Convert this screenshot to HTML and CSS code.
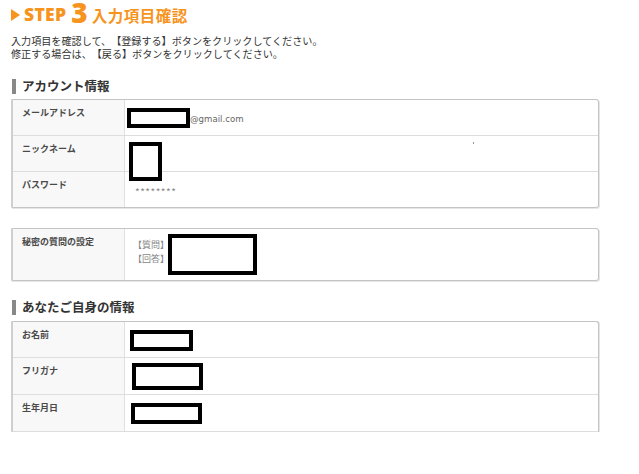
FILE: index.html
```html
<!DOCTYPE html>
<html lang="ja">
<head>
  <meta charset="UTF-8" />
  <meta name="viewport" content="width=device-width, initial-scale=1.0"/>
  <title>入力項目確認</title>
  <link rel="stylesheet" href="styles.css">
</head>
<body>

  <div class="page">
    <h1 class="step-title">
      <span class="step-arrow"></span><span class="step-word">STEP</span><span class="step-num">3</span><span class="step-name">入力項目確認</span>
    </h1>

    <p class="lead">
      <span class="lead-line">入力項目を確認して、【登録する】ボタンをクリックしてください。</span>
      <span class="lead-line">修正する場合は、【戻る】ボタンをクリックしてください。</span>
    </p>

    <h2 class="section-title">アカウント情報</h2>
    <div class="info-table">
      <div class="row">
        <div class="label">メールアドレス</div>
        <div class="value">
          <span class="mask mask-mail"></span><span class="mail-domain">@gmail.com</span>
        </div>
      </div>
      <div class="row">
        <div class="label">ニックネーム</div>
        <div class="value">
          <span class="mask mask-nick"></span>
          <span class="speck"></span>
        </div>
      </div>
      <div class="row">
        <div class="label">パスワード</div>
        <div class="value"><span class="password">********</span></div>
      </div>
    </div>

    <div class="info-table secret">
      <div class="row">
        <div class="label">秘密の質問の設定</div>
        <div class="value">
          <div class="qa">【質問】<br>【回答】</div>
          <span class="mask mask-qa"></span>
        </div>
      </div>
    </div>

    <h2 class="section-title">あなたご自身の情報</h2>
    <div class="info-table open">
      <div class="row">
        <div class="label">お名前</div>
        <div class="value"><span class="mask mask-name"></span></div>
      </div>
      <div class="row">
        <div class="label">フリガナ</div>
        <div class="value"><span class="mask mask-kana"></span></div>
      </div>
      <div class="row">
        <div class="label">生年月日</div>
        <div class="value"><span class="mask mask-birth"></span></div>
      </div>
    </div>
  </div>

</body>
</html>
```

FILE: styles.css
```css
* {
  box-sizing: border-box;
}

body {
  margin: 0;
  background: #fff;
  color: #333;
  font-family: "Noto Sans CJK JP", "Noto Sans", sans-serif;
  text-spacing-trim: space-all;
}

.page {
  width: 599px;
  padding: 0 0 0 11px;
}

/* step heading */
.step-title {
  margin: 0;
  height: 28px;
  display: flex;
  align-items: flex-end;
  color: #f7941d;
  font-weight: bold;
  line-height: 1;
}

.step-arrow {
  width: 0;
  height: 0;
  border-top: 6px solid transparent;
  border-bottom: 6px solid transparent;
  border-left: 9px solid #f7941d;
  margin: 0 4px 7px 0;
}

.step-word {
  font-family: "Open Sans", sans-serif;
  font-size: 17.5px;
  font-weight: 800;
  letter-spacing: 0.3px;
  padding-bottom: 5px;
}

.step-num {
  font-family: "Open Sans", sans-serif;
  font-size: 28px;
  font-weight: 800;
  margin: 0 4px 2px 5px;
}

.step-name {
  font-size: 15.5px;
  letter-spacing: 0.5px;
  padding-bottom: 5px;
}

.lead {
  margin: 6px 0 0;
  font-size: 10.1px;
  line-height: 13px;
  color: #333;
}

.lead-line {
  display: block;
}

/* section heading */
.section-title {
  margin: 19px 0 0 1px;
  height: 15px;
  padding-left: 6px;
  border-left: 4px solid #888;
  font-size: 12.5px;
  line-height: 14px;
  font-weight: bold;
  color: #333;
}

/* key / value table */
.info-table {
  margin-top: 5px;
  width: 588px;
  border: 1px solid #c4c4c4;
  border-left: 2px solid #cfcfcf;
  border-radius: 0 3px 3px 0;
  box-shadow: 1px 1px 0 #e6e6e6;
}

.info-table.secret {
  margin-top: 20px;
}

.info-table.open {
  margin-top: 6px;
  border-bottom: 1px solid #ddd;
  border-radius: 0 3px 0 0;
  box-shadow: 1px 0 0 #e6e6e6;
}

.row {
  display: grid;
  grid-template-columns: 112px 1fr;
  height: 36px;
  border-bottom: 1px solid #ddd;
}

.row:last-child {
  border-bottom: none;
  height: 35px;
}

.secret .row:last-child {
  height: 51px;
}

.open .row {
  height: 37px;
}

.open .row:first-child {
  height: 36px;
}

.open .row:last-child {
  height: 36px;
}

.label {
  background: #f8f8f8;
  border-right: 1px solid #e0e0e0;
  padding: 6px 0 0 9px;
  font-size: 9px;
  font-weight: bold;
  color: #4a4a4a;
}

.value {
  position: relative;
  padding: 10px 0 0 2px;
  font-size: 10px;
  color: #666;
}

.mail-domain {
  margin-left: 63px;
  font-family: "DejaVu Sans", sans-serif;
  font-size: 8.6px;
  line-height: 14px;
}

.password {
  display: block;
  padding: 2px 0 0 8px;
  color: #888;
  letter-spacing: 0.5px;
}

.qa {
  padding: 0 0 0 6px;
  margin-top: -1px;
  font-size: 9px;
  line-height: 14px;
  color: #888;
}

/* blacked-out values */
.mask {
  position: absolute;
  border: 4px solid #000;
  background: #fff;
}

.mask-mail  { left: 2px;  top: 8px;  width: 63px; height: 20px; }
.mask-nick  { left: 4px;  top: 6px;  width: 33px; height: 39px; }
.mask-qa    { left: 43px; top: 5px;  width: 89px; height: 41px; }
.mask-name  { left: 5px;  top: 8px;  width: 63px; height: 21px; }
.mask-kana  { left: 7px;  top: 5px;  width: 71px; height: 27px; }
.mask-birth { left: 6px;  top: 8px;  width: 71px; height: 21px; }

.speck {
  position: absolute;
  left: 348px;
  top: 6px;
  width: 1px;
  height: 2px;
  background: #999;
}
```
